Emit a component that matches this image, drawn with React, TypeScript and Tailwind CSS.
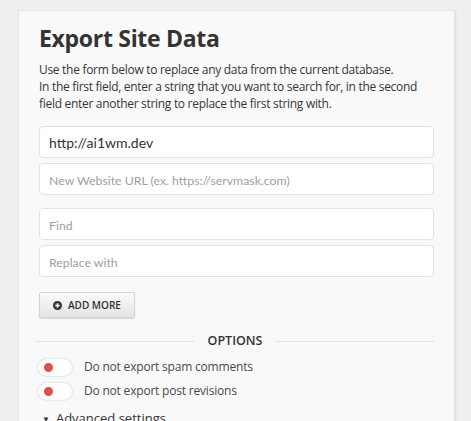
import React from 'react';

const Toggle: React.FC = () => (
  <div className="w-[34px] h-[17px] rounded-full bg-white shadow-[0_0_2px_rgba(0,0,0,0.25)] flex items-center pl-[6px]">
    <span className="w-[9px] h-[9px] rounded-full bg-[#e04f4f]" />
  </div>
);

const Field: React.FC<{ value?: string; placeholder: string }> = ({ value, placeholder }) => (
  <input
    readOnly
    defaultValue={value}
    placeholder={placeholder}
    className="w-full h-[32px] bg-white border border-[#e2e2e2] rounded-[4px] px-[9px] text-[14px] text-[#333] placeholder:text-[12.3px] placeholder:text-[#a0a0a0] outline-none font-['Lato',sans-serif]"
  />
);

const App: React.FC = () => {
  return (
    <div className="min-h-screen bg-[#efefef] pt-[10px] pl-[18px] font-['Open_Sans',sans-serif] overflow-hidden h-[421px]">
      <div className="w-[437px] bg-[#f9f9f9] border border-[#e6e6e6] shadow-[1px_1px_2px_rgba(0,0,0,0.08)] px-[20px] pt-[11px] pb-8 text-[#444]">
        <h1 className="text-[23px] leading-[32px] font-bold text-[#333] tracking-[-0.3px]">Export Site Data</h1>
        <p className="mt-[7px] text-[12px] leading-[17px] text-[#363636] tracking-[-0.3px]">
          Use the form below to replace any data from the current database.
          <br />
          In the first field, enter a string that you want to search for, in the second field enter another string to replace the first string with.
        </p>

        <div className="mt-[14px] flex flex-col gap-[5px]">
          <Field value="http://ai1wm.dev" placeholder="" />
          <Field placeholder="New Website URL (ex. https://servmask.com)" />
        </div>
        <div className="mt-[13px] flex flex-col gap-[5px]">
          <Field placeholder="Find" />
          <Field placeholder="Replace with" />
        </div>

        <button className="mt-[15px] w-[96px] h-[26px] rounded-[2px] border border-[#d4d4d4] bg-gradient-to-b from-[#fafafa] to-[#e4e4e4] shadow-[0_1px_1px_rgba(0,0,0,0.12)] flex items-center pl-[13px] gap-[6px] text-[10px] font-semibold text-[#333]">
          <svg width="9" height="9" viewBox="0 0 10 10">
            <circle cx="5" cy="5" r="5" fill="#333" />
            <path d="M5 2.5v5M2.5 5h5" stroke="#fff" strokeWidth="1.6" />
          </svg>
          ADD MORE
        </button>

        <div className="mt-[13px] flex items-center gap-[14px] -ml-[3px]">
          <div className="flex-1 h-px bg-[#e3e3e3]" />
          <span className="text-[12.5px] font-semibold text-[#333] leading-[20px]">OPTIONS</span>
          <div className="flex-1 h-px bg-[#e3e3e3]" />
        </div>

        <div className="mt-[7px] flex flex-col gap-[6px] -ml-[1px]">
          <label className="flex items-center gap-[12px] text-[12px] text-[#4a4a4a] tracking-[-0.2px]">
            <Toggle />
            Do not export spam comments
          </label>
          <label className="flex items-center gap-[12px] text-[12px] text-[#4a4a4a] tracking-[-0.2px]">
            <Toggle />
            Do not export post revisions
          </label>
        </div>

        <div className="mt-[9px] flex items-center gap-[6px] text-[13px] text-[#333] pl-[3px]">
          <span className="text-[8px]">▼</span>
          Advanced settings
        </div>
      </div>
    </div>
  );
};

export default App;
